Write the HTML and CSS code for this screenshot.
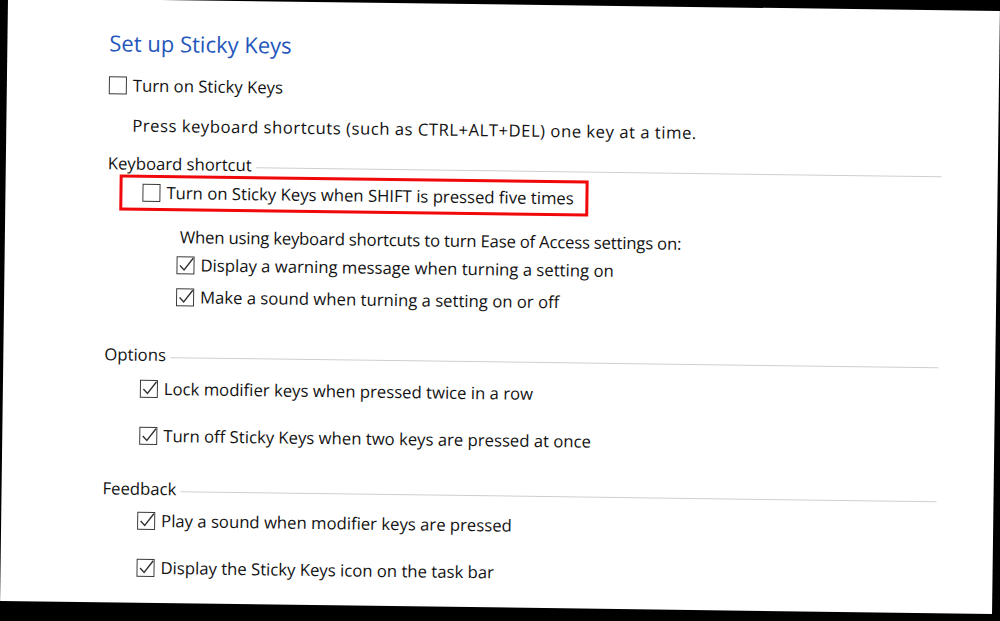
FILE: index.html
```html
<html>
<head>
<link rel="stylesheet" href="styles.css">
<title>Set up Sticky Keys</title>
</head>
<body>
<div class="sheet">

<h1 class="title">Set up Sticky Keys</h1>

<div class="row top-check">
  <span class="box"></span>
  <span>Turn on Sticky Keys</span>
</div>
<div class="row hint">Press keyboard shortcuts (such as CTRL+ALT+DEL) one key at a time.</div>

<div class="group-head kb-head">
  <span class="group-label">Keyboard shortcut</span>
  <span class="rule"></span>
</div>

<div class="marked">
  <div class="row">
    <span class="box"></span>
    <span>Turn on Sticky Keys when SHIFT is pressed five times</span>
  </div>
</div>

<div class="row sub-note">When using keyboard shortcuts to turn Ease of Access settings on:</div>
<div class="row sub-check first">
  <span class="box on"><svg viewBox="0 0 18 18"><path d="M3.5 9.2 L7.6 13.6 L16.6 1.8"/></svg></span>
  <span>Display a warning message when turning a setting on</span>
</div>
<div class="row sub-check second">
  <span class="box on"><svg viewBox="0 0 18 18"><path d="M3.5 9.2 L7.6 13.6 L16.6 1.8"/></svg></span>
  <span>Make a sound when turning a setting on or off</span>
</div>

<div class="group-head opt-head">
  <span class="group-label">Options</span>
  <span class="rule"></span>
</div>
<div class="row opt-check first">
  <span class="box on"><svg viewBox="0 0 18 18"><path d="M3.5 9.2 L7.6 13.6 L16.6 1.8"/></svg></span>
  <span>Lock modifier keys when pressed twice in a row</span>
</div>
<div class="row opt-check second">
  <span class="box on"><svg viewBox="0 0 18 18"><path d="M3.5 9.2 L7.6 13.6 L16.6 1.8"/></svg></span>
  <span>Turn off Sticky Keys when two keys are pressed at once</span>
</div>

<div class="group-head fb-head">
  <span class="group-label">Feedback</span>
  <span class="rule"></span>
</div>
<div class="row opt-check fb first">
  <span class="box on"><svg viewBox="0 0 18 18"><path d="M3.5 9.2 L7.6 13.6 L16.6 1.8"/></svg></span>
  <span>Play a sound when modifier keys are pressed</span>
</div>
<div class="row opt-check fb second">
  <span class="box on"><svg viewBox="0 0 18 18"><path d="M3.5 9.2 L7.6 13.6 L16.6 1.8"/></svg></span>
  <span>Display the Sticky Keys icon on the task bar</span>
</div>

</div>
</body>
</html>
```

FILE: styles.css
```css
body {
    margin: 0;
    background-color: #000;
    overflow: hidden;
    font-family: "Open Sans", "Noto Sans", sans-serif;
    font-size: 16.7px;
    color: #111;
}

.sheet {
    width: 992px;
    height: 603px;
    margin-left: 8px;
    margin-top: -2px;
    padding-left: 101px;
    box-sizing: border-box;
    background-color: #fff;
    transform: rotate(0.75deg);
    transform-origin: 0 0;
    overflow: hidden;
}

.title {
    margin: 28px 0 0 1px;
    height: 30px;
    line-height: 30px;
    font-size: 22px;
    font-weight: normal;
    color: #2456bb;
}

.row {
    display: flex;
    align-items: center;
    height: 24px;
    line-height: 24px;
    white-space: nowrap;
}

.box {
    display: inline-block;
    width: 18px;
    height: 18px;
    box-sizing: border-box;
    border: 1.5px solid #3a3a3a;
    margin-right: 6px;
    flex: none;
    position: relative;
}

.box svg {
    position: absolute;
    left: -1.5px;
    top: -1.5px;
    width: 18px;
    height: 18px;
}

.box path {
    fill: none;
    stroke: #333;
    stroke-width: 1.4;
}

.top-check { margin-top: 16px; margin-left: 1px; }
.hint { margin-top: 16px; padding-left: 25px; letter-spacing: 0.5px; }

.group-head {
    display: flex;
    align-items: center;
    height: 24px;
    line-height: 24px;
    width: 834px;
}

.group-label { padding-right: 4px; }

.rule {
    flex: 1;
    height: 1px;
    margin-top: 4px;
    background-color: #cfcfcf;
}

.kb-head { margin-top: 14px; margin-left: 1px; }

.marked {
    display: inline-flex;
    margin: -1px 0 0 13px;
    padding: 0 12px 0 20px;
    height: 30px;
    border: 3px solid #f0080a;
    align-items: center;
}

.sub-note { margin-top: 14px; padding-left: 74px; letter-spacing: -0.2px; }
.sub-check { padding-left: 71px; }
.sub-check.first { margin-top: 4px; }
.sub-check.second { margin-top: 8px; }

.opt-head { margin-top: 34px; }
.opt-check { padding-left: 36px; }
.opt-check.first { margin-top: 10px; }
.opt-check.second { margin-top: 23px; }

.fb-head { margin-top: 29px; }
.fb { padding-left: 35px; }
.fb.first { margin-top: 8px; }
```
